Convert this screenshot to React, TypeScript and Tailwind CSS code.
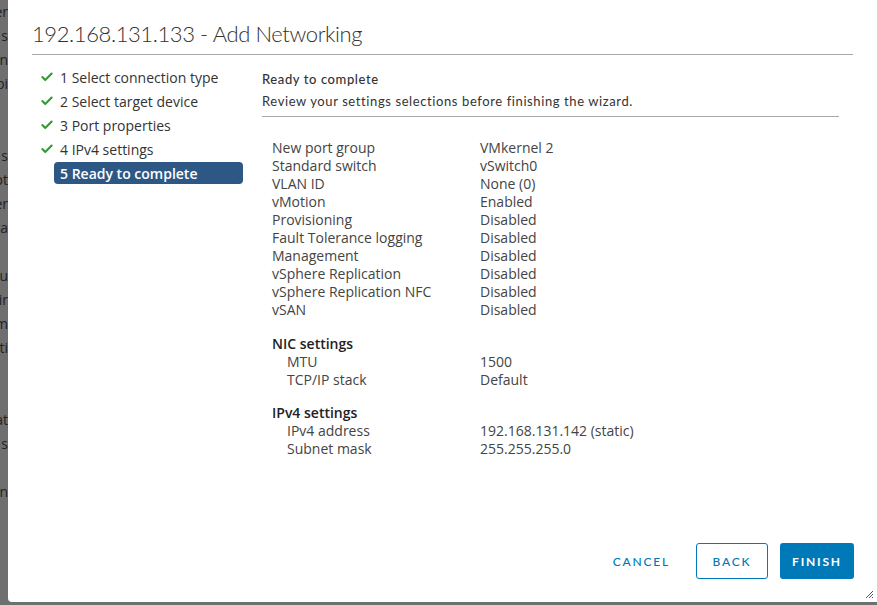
import { Check } from "lucide-react"

const steps = [
  "1 Select connection type",
  "2 Select target device",
  "3 Port properties",
  "4 IPv4 settings",
]

const general = [
  ["New port group", "VMkernel 2"],
  ["Standard switch", "vSwitch0"],
  ["VLAN ID", "None (0)"],
  ["vMotion", "Enabled"],
  ["Provisioning", "Disabled"],
  ["Fault Tolerance logging", "Disabled"],
  ["Management", "Disabled"],
  ["vSphere Replication", "Disabled"],
  ["vSphere Replication NFC", "Disabled"],
  ["vSAN", "Disabled"],
]

const nic = [
  ["MTU", "1500"],
  ["TCP/IP stack", "Default"],
]

const ipv4 = [
  ["IPv4 address", "192.168.131.142 (static)"],
  ["Subnet mask", "255.255.255.0"],
]

const behind = ["er", "s", "n", "pi", "", "", "s", "ot", "er", "ra", "", "u", "ir", "m", "ti", "", "", "at", "s", "", "n"]

function Row({ label, value, indent }: { label: string; value: string; indent?: boolean }) {
  return (
    <div className="flex h-[18px] items-center">
      <div className={`w-[208px] ${indent ? "pl-[15px]" : ""}`}>{label}</div>
      <div>{value}</div>
    </div>
  )
}

export default function App() {
  const ui = { fontFamily: '"Segoe UI", "Open Sans", "Noto Sans", sans-serif' }
  const head = { fontFamily: 'Lato, "Open Sans", sans-serif' }

  return (
    <div className="flex h-[605px] w-[877px] overflow-hidden bg-[#6f6f6f]" style={ui}>
      {/* page behind the modal */}
      <div className="flex w-[8px] flex-col items-end overflow-hidden text-[14px] leading-[24px] text-[#222]">
        {behind.map((t, i) => (
          <div key={i} className="h-[24px] whitespace-nowrap">{t}</div>
        ))}
      </div>

      <div className="relative mb-[3px] flex flex-1 flex-col rounded-bl-[4px] bg-white">
        <div className="px-[24px] pt-[20px]">
          <h1
            className="border-b border-[#a8a8a8] pb-[6px] text-[22px] font-light leading-[28px] tracking-[-0.4px] text-[#313131]"
            style={head}
          >
            192.168.131.133 - Add Networking
          </h1>
        </div>

        <div className="flex flex-1 pl-[32px] pt-[10px]">
          {/* steps */}
          <div className="w-[222px] text-[14px] text-[#333]">
            {steps.map((s) => (
              <div key={s} className="flex h-[24px] items-center">
                <Check className="mr-[6px] h-[14px] w-[14px] text-[#2f9a30]" strokeWidth={3.5} />
                <span>{s}</span>
              </div>
            ))}
            <div className="ml-[14px] mt-[1px] flex h-[22px] w-[189px] items-center rounded-[4px] bg-[#2d5886] pl-[6px] font-semibold text-white">
              5 Ready to complete
            </div>
          </div>

          {/* content */}
          <div className="flex-1 pr-[38px]">
            <div className="border-b border-[#a8a8a8] pb-[4px] pt-[3px] text-[13px] tracking-[0.6px] text-[#333]" style={head}>
              <div className="font-medium leading-[22px]">Ready to complete</div>
              <div className="leading-[22px]">Review your settings selections before finishing the wizard.</div>
            </div>

            <div className="pl-[10px] pt-[21px] text-[14px] text-[#444]">
              {general.map(([l, v]) => (
                <Row key={l} label={l} value={v} />
              ))}

              <div className="mt-[16px] flex h-[18px] items-center font-semibold text-[#222]">NIC settings</div>
              {nic.map(([l, v]) => (
                <Row key={l} label={l} value={v} indent />
              ))}

              <div className="mt-[15px] flex h-[18px] items-center font-semibold text-[#222]">IPv4 settings</div>
              {ipv4.map(([l, v]) => (
                <Row key={l} label={l} value={v} indent />
              ))}
            </div>
          </div>
        </div>

        {/* footer */}
        <div className="flex items-center justify-end gap-[12px] pb-[23px] pr-[23px] text-[12px] tracking-[1.8px]" style={head}>
          <button className="h-[36px] px-[14px] pt-[2px] font-medium text-[#0079b8]">CANCEL</button>
          <button className="h-[36px] w-[72px] rounded-[3px] border border-[#0079b8] pt-[2px] font-medium text-[#0079b8]">
            BACK
          </button>
          <button className="h-[36px] w-[74px] rounded-[3px] bg-[#0079b8] pt-[2px] font-bold text-white">FINISH</button>
        </div>

        <svg className="absolute bottom-[3px] right-[3px]" width="9" height="9" viewBox="0 0 9 9">
          <path d="M8 1 L1 8 M8 4 L4 8 M8 7 L7 8" stroke="#555" strokeWidth="1" />
        </svg>
      </div>
    </div>
  )
}
